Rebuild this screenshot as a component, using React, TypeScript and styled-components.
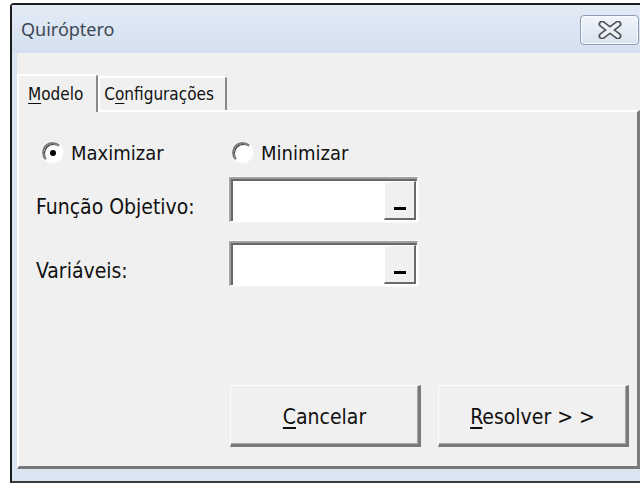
import styled, { createGlobalStyle } from 'styled-components'
import type { FC, ReactNode } from 'react'

const uiFont = `"DejaVu Sans Condensed", "DejaVu Sans", sans-serif`
const titleFont = `"Noto Sans", "Open Sans", sans-serif`

const GlobalStyle = createGlobalStyle`
  html, body {
    margin: 0;
    padding: 0;
    background: #ffffff;
  }
  * {
    box-sizing: border-box;
  }
`

const Page = styled.div`
  width: 640px;
  height: 483px;
  padding: 3px 0 0 10px;
  overflow: hidden;
`

const Window = styled.div`
  height: 480px;
  display: flex;
  flex-direction: column;
  background: #dae5f2;
  border-top: 2px solid #1c1c1c;
  border-left: 2px solid #1c1c1c;
  border-bottom: 2px solid #3a3a3a;
  border-top-left-radius: 4px;
`

const TitleBar = styled.div`
  height: 48px;
  flex: none;
  display: flex;
  align-items: center;
  justify-content: space-between;
  padding-left: 9px;
  background: linear-gradient(#e3ebf6, #d4e0ef);
`

const Title = styled.span`
  font-family: ${titleFont};
  font-size: 18px;
  color: #3e4856;
`

const CloseButton = styled.div`
  width: 59px;
  height: 30px;
  margin-right: 1px;
  margin-top: 2px;
  display: flex;
  align-items: center;
  justify-content: center;
  border: 1px solid #8c9bb1;
  border-radius: 4px;
  background: linear-gradient(#f1f5fa, #d9e3ef);
  box-shadow: inset 0 0 0 1px #f8fbff;
`

const Client = styled.div`
  flex: 1;
  display: flex;
  flex-direction: column;
  margin: 0 0 12px 5px;
  padding-top: 19px;
  background: #f0f0f0;
`

const TabStrip = styled.div`
  height: 38px;
  flex: none;
  display: flex;
  align-items: flex-end;
`

const Tab = styled.div<{ active?: boolean }>`
  height: ${({ active }) => (active ? 38 : 34)}px;
  padding: ${({ active }) => (active ? '0 13px 0 9px' : '0 11px 0 4px')};
  display: flex;
  align-items: center;
  font-family: ${uiFont};
  font-size: 17px;
  color: #111;
  background: #f0f0f0;
  border-top: 2px solid #ffffff;
  border-left: 2px solid #ffffff;
  border-right: 2px solid #8a8a8a;
  border-top-right-radius: 3px;
  margin-bottom: ${({ active }) => (active ? -2 : 0)}px;
  position: relative;
  z-index: ${({ active }) => (active ? 1 : 0)};
`

const Panel = styled.div`
  flex: 1;
  display: flex;
  flex-direction: column;
  padding: 30px 8px 19px 17px;
  border-top: 2px solid #ffffff;
  border-left: 2px solid #ffffff;
  border-right: 3px solid #7c7c7c;
  border-bottom: 3px solid #777777;
`

const Key = styled.span`
  text-decoration: underline;
  text-underline-offset: 3px;
`

const RadioRow = styled.div`
  display: flex;
  height: 21px;
  padding-left: 6px;
`

const RadioItem = styled.label<{ width?: number }>`
  width: ${({ width }) => (width ? `${width}px` : 'auto')};
  display: flex;
  align-items: center;
  gap: 8px;
  font-family: ${uiFont};
  font-size: 20px;
  color: #111;
`

const RadioCircle = styled.span<{ checked?: boolean }>`
  width: 21px;
  height: 21px;
  flex: none;
  border-radius: 50%;
  display: flex;
  align-items: center;
  justify-content: center;
  background: #ffffff;
  border: 2px solid;
  border-color: #7a7a7a #ffffff #ffffff #7a7a7a;
  box-shadow: inset 1px 1px 0 #3f3f3f, 0 0 0 1px #f4f4f4;

  &::after {
    content: '';
    width: 6px;
    height: 6px;
    border-radius: 50%;
    background: ${({ checked }) => (checked ? '#000' : 'transparent')};
  }
`

const FieldGrid = styled.div`
  display: grid;
  grid-template-columns: 193px 189px;
  row-gap: 19px;
  margin-top: 14px;
  align-items: center;
`

const FieldLabel = styled.span`
  font-family: ${uiFont};
  font-size: 21px;
  color: #111;
  padding-top: 14px;
`

const RefBox = styled.div`
  height: 45px;
  display: flex;
  justify-content: flex-end;
  padding: 2px 1px 1px 0;
  background: #ffffff;
  border-top: 2px solid #a0a0a0;
  border-left: 2px solid #a0a0a0;
  border-right: 1px solid #ffffff;
  border-bottom: 1px solid #ffffff;
  box-shadow: inset 2px 2px 0 #696969, 0 0 0 1px #f7f7f7;
`

const RefButton = styled.div`
  width: 32px;
  display: flex;
  align-items: flex-end;
  justify-content: center;
  padding-bottom: 8px;
  background: #f0f0f0;
  border-top: 1px solid #ffffff;
  border-left: 1px solid #ffffff;
  border-right: 2px solid #6a6a6a;
  border-bottom: 2px solid #6a6a6a;

  &::after {
    content: '';
    width: 12px;
    height: 3px;
    background: #000;
  }
`

const Spacer = styled.div`
  flex: 1;
`

const ButtonRow = styled.div`
  display: flex;
  justify-content: flex-end;
  gap: 17px;
`

const PushButton = styled.button`
  width: 191px;
  height: 62px;
  padding: 3px 0 0;
  font-family: ${uiFont};
  font-size: 21px;
  color: #111;
  background: #f0f0f0;
  border-top: 1px solid #fdfdfd;
  border-left: 1px solid #fdfdfd;
  border-right: 3px solid #7a7a7a;
  border-bottom: 3px solid #7a7a7a;
  box-shadow: inset -1px -1px 0 #a8a8a8;
`

const CloseIcon: FC = () => (
  <svg width="26" height="18" viewBox="0 0 26 18">
    <path
      d="M5 3 L21 15 M21 3 L5 15"
      stroke="#50555c"
      strokeWidth="7"
      strokeLinecap="round"
    />
    <path
      d="M5 3 L21 15 M21 3 L5 15"
      stroke="#eef1f5"
      strokeWidth="3.5"
      strokeLinecap="round"
    />
  </svg>
)

const Radio: FC<{ checked?: boolean; width?: number; children: ReactNode }> = ({
  checked,
  width,
  children,
}) => (
  <RadioItem width={width}>
    <RadioCircle checked={checked} />
    {children}
  </RadioItem>
)

const RefField: FC<{ label: string }> = ({ label }) => (
  <>
    <FieldLabel>{label}</FieldLabel>
    <RefBox>
      <RefButton />
    </RefBox>
  </>
)

const App: FC = () => (
  <>
    <GlobalStyle />
    <Page>
      <Window>
        <TitleBar>
          <Title>Quiróptero</Title>
          <CloseButton>
            <CloseIcon />
          </CloseButton>
        </TitleBar>
        <Client>
          <TabStrip>
            <Tab active>
              <Key>M</Key>odelo
            </Tab>
            <Tab>
              C<Key>o</Key>nfigurações
            </Tab>
          </TabStrip>
          <Panel>
            <RadioRow>
              <Radio checked width={190}>
                Maximizar
              </Radio>
              <Radio>Minimizar</Radio>
            </RadioRow>
            <FieldGrid>
              <RefField label="Função Objetivo:" />
              <RefField label="Variáveis:" />
            </FieldGrid>
            <Spacer />
            <ButtonRow>
              <PushButton>
                <Key>C</Key>ancelar
              </PushButton>
              <PushButton>
                <Key>R</Key>esolver &gt; &gt;
              </PushButton>
            </ButtonRow>
          </Panel>
        </Client>
      </Window>
    </Page>
  </>
)

export default App
